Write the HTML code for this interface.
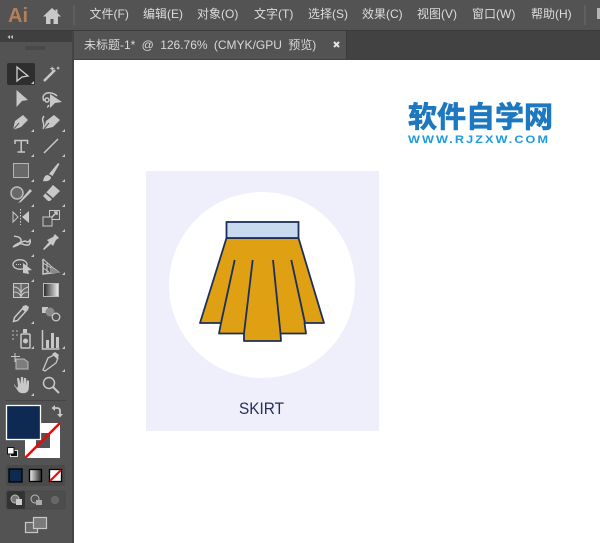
<!DOCTYPE html>
<html><head><meta charset="utf-8"><style>
html,body{margin:0;padding:0;background:#fff}
body{width:600px;height:543px;overflow:hidden;position:relative}
svg{position:absolute;left:0;top:0;display:block}
text{font-family:"Liberation Sans","Noto Sans CJK SC",sans-serif}
.m{font-size:12px;fill:#dcdcdc}
.i{fill:none;stroke:#c8c8c8;stroke-width:1.5}
.f{fill:#c8c8c8}
</style></head><body>
<svg width="600" height="543" viewBox="0 0 600 543">
<defs><linearGradient id="g" x1="0" x2="1"><stop offset="0" stop-color="#262626"/><stop offset="1" stop-color="#f0f0f0"/></linearGradient></defs>
<rect width="600" height="543" fill="#fff"/>
<!-- menu bar -->
<rect width="600" height="30" fill="#535353"/>
<rect y="30" width="600" height="1" fill="#3a3a3a"/>
<text x="8" y="22" style="font-size:20px;font-weight:bold" fill="#b57f5c">Ai</text>
<path d="M52 8L43 16.500h3V24h4.500v-5h3v5H58v-7.500h3L57.500 13V9.500h-2V11z" fill="#c8c8c8"/>
<rect x="73" y="5" width="2" height="20" fill="#5f5f5f"/>
<text class="m" x="89.500" y="18">文件(F)</text>
<text class="m" x="143" y="18">编辑(E)</text>
<text class="m" x="197" y="18">对象(O)</text>
<text class="m" x="254" y="18">文字(T)</text>
<text class="m" x="308" y="18">选择(S)</text>
<text class="m" x="362" y="18">效果(C)</text>
<text class="m" x="417" y="18">视图(V)</text>
<text class="m" x="472" y="18">窗口(W)</text>
<text class="m" x="531" y="18">帮助(H)</text>
<rect x="584" y="5" width="2" height="20" fill="#5f5f5f"/>
<rect x="597" y="8" width="3" height="11" fill="#b5b5b5"/>
<!-- tab bar -->
<rect y="31" width="600" height="29" fill="#424242"/>
<rect x="74" y="31" width="272" height="28" fill="#535353"/>
<rect x="346" y="31" width="1" height="28" fill="#3a3a3a"/>
<text x="84" y="49" style="font-size:12px;word-spacing:3px" fill="#d8d8d8">未标题-1* @ 126.76% (CMYK/GPU 预览)</text>
<path d="M334 42l5 5M339 42l-5 5" stroke="#e4e4e4" stroke-width="2" fill="none"/>
<!-- toolbar -->
<rect y="31" width="72" height="512" fill="#535353"/>
<rect x="72" y="31" width="2" height="512" fill="#444"/>
<rect y="31" width="72" height="11" fill="#3f3f3f"/>
<path d="M10 35l-2.500 2 2.500 2zM13 35l-2.500 2 2.500 2z" fill="#c0c0c0"/>
<path d="M26 46v4M28 46v4M30 46v4M32 46v4M34 46v4M36 46v4M38 46v4M40 46v4M42 46v4M44 46v4" stroke="#3f3f3f" stroke-width="1"/>
<!-- selected tool -->
<rect x="7" y="63" width="28" height="22" rx="2" fill="#2e2e2e"/>
<path d="M17 67v14l5-4 6-1z" fill="none" stroke="#d0d0d0" stroke-width="1.300"/>
<g class="f">
<path d="M34 84h-3l3-3z"/><path d="M65 132h-3l3-3z"/><path d="M34 132h-3l3-3z"/>
<path d="M34 157h-3l3-3z"/><path d="M65 157h-3l3-3z"/><path d="M34 182h-3l3-3z"/><path d="M65 182h-3l3-3z"/>
<path d="M34 207h-3l3-3z"/><path d="M65 207h-3l3-3z"/><path d="M34 232h-3l3-3z"/><path d="M65 232h-3l3-3z"/>
<path d="M34 257h-3l3-3z"/><path d="M34 282h-3l3-3z"/><path d="M65 275h-3l3-3z"/>
<path d="M34 324h-3l3-3z"/><path d="M34 349h-3l3-3z"/><path d="M65 349h-3l3-3z"/><path d="M65 372h-3l3-3z"/><path d="M34 396h-3l3-3z"/>
</g>
<!-- wand -->
<path d="M44 81l11-11" stroke="#c8c8c8" stroke-width="2.500"/>
<path d="M52 66l1 2 2 .5-2 1-1 2-.5-2-2-1 2-.5zM58 66l.7 1.500 1.500.5-1.500.7-.7 1.500-.5-1.500-1.500-.7 1.500-.5z" class="f"/>
<!-- direct selection, group -->
<path d="M16.500 90v17l5.500-6 6-1z" class="f"/>
<path d="M44 101c-3-6 2-9 7-8 3 .5 5 2 6 3" class="i"/>
<path d="M50 94v14l5-5 7-1z" class="f"/>
<circle cx="47" cy="100" r="2" class="i" stroke-width="1"/>
<path d="M49 105c-1 2-2 2-2 2" class="i"/>
<!-- pen -->
<path d="M13 130l2-9 8-6 5 5-7 7z" class="f"/>
<path d="M13 130l6-7" stroke="#535353"/>
<path d="M44 129l2-8 8-6 6 5-7 7z" class="f"/>
<path d="M44 116c-4 5 2 7-1 13" class="i"/>
<path d="M44 129l5-6" stroke="#535353"/>
<!-- type, line -->
<path d="M15 144v-3.500h12.500v3.500M21.200 140.500V152M17.500 152h7.500" class="i" stroke-width="2"/>
<path d="M44 153l14-14" class="i"/>
<!-- rect, brush -->
<rect x="13.500" y="163.500" width="15" height="14" fill="#696969" stroke="#b5b5b5"/>
<path d="M43 181c1-4 2-6 5-6l3 2c0 3-3 5-8 4z" class="f"/>
<path d="M49 174l9-11 1.500 1-7 12z" class="f"/>
<!-- shaper, eraser -->
<circle cx="17" cy="193" r="6" fill="#696969" stroke="#bbb" stroke-width="1.500"/>
<path d="M19 202l11-13 2 2-11 11-3 1z" class="f"/>
<path d="M43 196l10-11 7 6-10 10h-2z" class="f"/>
<path d="M46 193l7 6" stroke="#535353" stroke-width="1.500"/>
<!-- reflect, scale -->
<path d="M13 212v10l5-5z" fill="#535353" stroke="#c8c8c8"/>
<path d="M29 211v12l-7-6z" class="f"/>
<path d="M20.500 209v16" stroke="#d0d0d0" stroke-dasharray="1.500 1.500"/>
<rect x="49.500" y="210.500" width="10" height="9" fill="none" stroke="#c8c8c8"/>
<rect x="43" y="217" width="9" height="9" fill="#535353" stroke="#c8c8c8"/>
<path d="M52 217l5-5M54 212h3v3" class="i" stroke-width="1"/>
<!-- puppet, pin -->
<path d="M14 236c2 1 4 0 6 2s1 5-2 7l-5 2c3-3 8-5 12-6 2 0 2 3 5-1 1 3-1 6-4 5-3 0-4-2-6-1" class="i" stroke-width="1.700"/>
<path d="M43 249l6-7-2-2 6-3 2-3 4 4-3 2-3 6-2-2-7 6z" class="f"/>
<!-- shape builder, perspective -->
<ellipse cx="20" cy="264.500" rx="7" ry="4.800" fill="none" stroke="#c8c8c8" stroke-width="1.300"/>
<path d="M16 264.500h6" stroke="#c8c8c8" stroke-dasharray="1 1"/>
<path d="M23 263l9 7-4 .5 1 3.500-6-1z" class="f"/>
<path d="M43 259v15l16-2" class="i" stroke-width="1"/>
<path d="M43 259l9 8 7 5M43 263l8 5M43 268l6 4M47 262v11M51 266v7" stroke="#c8c8c8" fill="none" stroke-width="1"/>
<path d="M51 267l10 6h-10z" fill="#8a8a8a"/>
<!-- mesh, gradient -->
<rect x="13.500" y="283.500" width="15" height="14" fill="#666" stroke="#c8c8c8"/>
<path d="M14 287c4 0 6 3 7 6 1-3 4-5 7-6M14 292c3 0 6 1 7 5 1-4 4-5 7-5M21 284v13" stroke="#c8c8c8" fill="none" stroke-width="1"/>
<rect x="43.500" y="283.500" width="15" height="13" fill="url(#g)" stroke="#bbb"/>
<!-- eyedropper, blend -->
<path d="M13.500 321.500l1-4 9-10 3 3-9 10z" fill="none" stroke="#c8c8c8" stroke-width="1.500"/>
<path d="M23 306l3-1 3 2-1 3-3 2-3-3z" class="f"/>
<rect x="42" y="307" width="6" height="6" class="f"/>
<circle cx="50" cy="312" r="4.500" fill="#8a8a8a"/>
<circle cx="56" cy="317" r="3.800" fill="#535353" stroke="#c8c8c8" stroke-width="1.300"/>
<!-- symbol sprayer, graph -->
<path d="M12 331h2M16 331h2M12 335h2M16 335h2M12 339h2" stroke="#999" stroke-width="1.500"/>
<rect x="21" y="334" width="9" height="14" rx="1" fill="none" stroke="#c8c8c8" stroke-width="1.500"/>
<rect x="23" y="329" width="4" height="4" class="f"/>
<circle cx="25.500" cy="341" r="2.500" class="f"/>
<path d="M42.500 330v19h17" class="i" stroke-width="1"/>
<rect x="46" y="340" width="3" height="8" class="f"/><rect x="51" y="333" width="3" height="15" class="f"/><rect x="56" y="337" width="3" height="11" class="f"/>
<!-- artboard, knife -->
<path d="M15 353v9M11 356.500h9" stroke="#c8c8c8" stroke-width="1"/>
<path d="M16 359h8l4 3v7H16z" fill="#7d7d7d" stroke="#bbb" stroke-width="1"/>
<path d="M43 370l5-12 6-3 4 3-2 5-11 8z" fill="none" stroke="#c8c8c8" stroke-width="1.300"/>
<path d="M52 354l3-2 4 3-2 4z" class="f"/>
<!-- hand, zoom -->
<path d="M14 385l4 6c2 3 8 3 10 0 1-2 1-4 1-10-1-1-2-1-2 0v4l-1-7h-2l-.5 6-.5-7h-2l-.5 7-1.500-6h-2l1 8-1 2-3-4z" class="f"/>
<circle cx="49" cy="383" r="5.500" fill="none" stroke="#c8c8c8" stroke-width="1.500"/>
<path d="M53 387l6 6" stroke="#c8c8c8" stroke-width="2"/>
<rect x="6" y="400" width="60" height="1" fill="#444"/>
<!-- fill/stroke -->
<rect x="25" y="423" width="35" height="35" fill="#fff"/>
<rect x="36" y="433" width="14" height="15" fill="#535353"/>
<path d="M25 458l35-35" stroke="#f00" stroke-width="2.500"/>
<rect x="6.500" y="405.500" width="34" height="34" fill="#0f2a52" stroke="#fff" stroke-width="1.300"/>
<path d="M53 408h4c2 0 3 1 3 3v4" fill="none" stroke="#c8c8c8" stroke-width="1.800"/>
<path d="M55 405l-3.500 3 3.500 3zM57 414l3 3.500 3-3.500z" fill="#c8c8c8"/>
<rect x="10.500" y="450.500" width="7" height="6" fill="#111" stroke="#ddd"/>
<rect x="7.500" y="447.500" width="6.500" height="6.500" fill="#fff" stroke="#111"/>
<!-- color mode -->
<rect x="6" y="465" width="59" height="21" rx="2" fill="#4a4a4a"/>
<rect x="9" y="469" width="13" height="13" fill="#0f2a52" stroke="#000" stroke-width="1.300"/>
<rect x="29.500" y="469.500" width="12" height="12" fill="url(#g)" stroke="#000" stroke-width="1.300" transform="rotate(180 35.500 475.500)"/>
<rect x="49.500" y="469.500" width="12" height="12" fill="#fff" stroke="#000" stroke-width="1.300"/>
<path d="M50 481l11-11" stroke="#f00" stroke-width="2"/>
<!-- draw mode -->
<rect x="6" y="491" width="59" height="18" rx="2" fill="#4d4d4d" stroke="#484848"/>
<rect x="7" y="491" width="18" height="18" rx="2" fill="#333"/>
<circle cx="15" cy="499" r="4" fill="#777" stroke="#bbb"/><rect x="16" y="499" width="6" height="6" fill="#ccc"/>
<circle cx="35" cy="499" r="4" fill="#535353" stroke="#bbb"/><rect x="36" y="500" width="6" height="5" fill="#aaa"/>
<circle cx="55" cy="500" r="3.500" fill="#666" stroke="#6d6d6d"/>
<!-- screen mode -->
<rect x="25.500" y="522.500" width="12" height="10" fill="#6a6a6a" stroke="#c8c8c8" stroke-width="1.200"/>
<rect x="33.500" y="517.500" width="13" height="11" fill="#7a7a7a" stroke="#c8c8c8" stroke-width="1.200"/>
<!-- canvas art -->
<rect x="146" y="171" width="233" height="260" fill="#eeeffa"/>
<circle cx="262" cy="285" r="93" fill="#fff"/>
<path d="M226.500 238L200 323h21l-2 10.500h25l0 7.500h37l-.5-7.500H306l-1.500-10.500H324L298.500 238z" fill="#dfa013" stroke="#1c2f59" stroke-width="1.800" stroke-linejoin="round"/>
<rect x="226.500" y="222" width="72" height="16" fill="#c8daf0" stroke="#1c2f59" stroke-width="1.800"/>
<path d="M234.700 260L221 323M252.700 260L244 333.500M273 260L280.500 333.500M291.300 260L305 323" stroke="#1c2f59" stroke-width="1.800" fill="none"/>
<text x="239" y="414" textLength="45" lengthAdjust="spacingAndGlyphs" style="font-size:17px" fill="#24305a">SKIRT</text>
<!-- watermark -->
<text x="408" y="127" style="font-size:29px;font-weight:bold" fill="#1d78c0" stroke="#1d78c0" stroke-width=".8">软件自学网</text>
<text transform="translate(408 143) scale(1.15 1)" style="font-size:11px;font-weight:bold;letter-spacing:1.800px" fill="#1e9be0">WWW.RJZXW.COM</text>
</svg>
</body></html>
